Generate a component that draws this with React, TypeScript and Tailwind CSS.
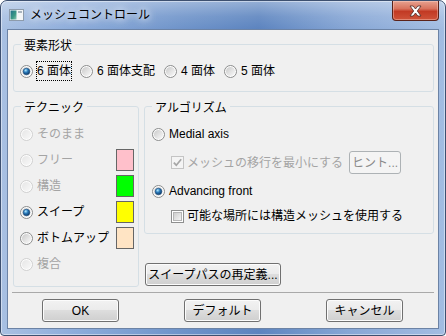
import clsx from 'clsx';
import type { ReactNode } from 'react';

const Radio = ({ checked = false, disabled = false }: { checked?: boolean; disabled?: boolean }) => (
  <svg width="13" height="13" viewBox="0 0 13 13" className="shrink-0">
    <defs>
      <linearGradient id="rb-face" x1="0" y1="0" x2="1" y2="1">
        <stop offset="0" stopColor="#c9c9c9" />
        <stop offset="1" stopColor="#fafafa" />
      </linearGradient>
      <linearGradient id="rb-face-dis" x1="0" y1="0" x2="1" y2="1">
        <stop offset="0" stopColor="#e6e6e6" />
        <stop offset="1" stopColor="#f8f8f8" />
      </linearGradient>
      <radialGradient id="rb-dot" cx="0.38" cy="0.32" r="0.7">
        <stop offset="0" stopColor="#b4ecff" />
        <stop offset="0.45" stopColor="#2b7cbd" />
        <stop offset="1" stopColor="#0d3763" />
      </radialGradient>
    </defs>
    <circle cx="6.5" cy="6.5" r="6" fill="#fdfdfd" stroke={disabled ? '#cfcfcf' : '#8b8c8c'} />
    <circle cx="6.5" cy="6.5" r="4.6" fill={disabled ? 'url(#rb-face-dis)' : 'url(#rb-face)'} />
    {checked && <circle cx="6.5" cy="6.5" r="3.3" fill="url(#rb-dot)" stroke="#174a7c" strokeWidth="0.6" />}
  </svg>
);

const Check = ({ checked = false, disabled = false }: { checked?: boolean; disabled?: boolean }) => (
  <svg width="13" height="13" viewBox="0 0 13 13" className="shrink-0">
    <defs>
      <linearGradient id="cb-face" x1="0" y1="0" x2="1" y2="1">
        <stop offset="0" stopColor="#cbcbcb" />
        <stop offset="1" stopColor="#f6f6f6" />
      </linearGradient>
    </defs>
    <rect x="0.5" y="0.5" width="12" height="12" fill={disabled ? '#f4f4f4' : '#ffffff'} stroke={disabled ? '#c4c4c4' : '#8e8f8f'} />
    {!disabled && <rect x="2.5" y="2.5" width="8" height="8" fill="url(#cb-face)" stroke="#b5b5b5" />}
    {checked && (
      <path d="M2.8 6.6 L5.3 9.2 L10.2 3.2" fill="none" stroke={disabled ? '#a6a6a6' : '#222222'} strokeWidth="1.7" />
    )}
  </svg>
);

const Btn = ({ children, className, disabled }: { children: ReactNode; className?: string; disabled?: boolean }) => (
  <button
    disabled={disabled}
    className={clsx(
      'h-[23px] shrink-0 rounded-[3px] border flex items-center justify-center text-[12px] leading-[16px]',
      disabled
        ? 'border-[#adb2b5] bg-[#f4f4f4] text-[#8a8a8a]'
        : 'border-[#707070] text-black bg-[linear-gradient(180deg,#f2f2f2_0%,#ebebeb_48%,#dddddd_50%,#cfcfcf_100%)] shadow-[inset_0_0_0_1px_#fcfcfc]',
      className
    )}
  >
    {children}
  </button>
);

const Legend = ({ children }: { children: ReactNode }) => (
  <legend className="ml-[7px] px-[3px] pt-[4px] leading-[16px] text-black">{children}</legend>
);

const TitleIcon = () => (
  <svg width="15" height="12" viewBox="0 0 15 12" className="shrink-0 ml-[8px]">
    <defs>
      <linearGradient id="ti-l" x1="0" y1="0" x2="1" y2="1">
        <stop offset="0" stopColor="#1f6f8c" />
        <stop offset="0.6" stopColor="#3c9a86" />
        <stop offset="1" stopColor="#8cc7b6" />
      </linearGradient>
    </defs>
    <rect x="0.5" y="0.5" width="14" height="11" fill="#f3f5f7" stroke="#8d9bab" />
    <rect x="1.5" y="1.5" width="6" height="9" fill="url(#ti-l)" />
    <rect x="9" y="2" width="4" height="2" fill="#a9b4bf" />
  </svg>
);

const techniques = [
  { label: 'そのまま', disabled: true, color: null },
  { label: 'フリー', disabled: true, color: 'bg-[#ffc0cb]' },
  { label: '構造', disabled: true, color: 'bg-[#00ff00]' },
  { label: 'スイープ', checked: true, color: 'bg-[#ffff00]' },
  { label: 'ボトムアップ', color: 'bg-[#ffe4c4]' },
  { label: '複合', disabled: true, color: null },
];

const shapes = ['6 面体', '6 面体支配', '4 面体', '5 面体'];

export default function App() {
  return (
    <div className="w-[446px] h-[336px] font-['Liberation_Sans','Noto_Sans_CJK_JP',sans-serif] text-[12px] leading-[16px] text-black">
      <div className="w-full h-full flex flex-col rounded-t-[7px] rounded-b-[4px] border border-[#3d5070] overflow-hidden shadow-[inset_0_0_0_1px_rgba(255,255,255,0.45)] bg-[linear-gradient(90deg,#a8c0e2_0%,#8eaddb_16%,#6f94ca_40%,#5c84bf_58%,#86a6d5_78%,#a3bde2_100%)]">
        {/* title bar */}
        <div className="h-[28px] shrink-0 flex items-center bg-[linear-gradient(180deg,rgba(255,255,255,0.35)_0%,rgba(255,255,255,0.1)_55%,rgba(255,255,255,0)_100%)]">
          <TitleIcon />
          <span className="ml-[6px] text-[12px] text-black [text-shadow:0_0_6px_rgba(255,255,255,0.95),0_0_10px_rgba(255,255,255,0.8),0_0_14px_rgba(255,255,255,0.6)]">
            メッシュコントロール
          </span>
          <div className="ml-auto mr-[6px] self-start w-[47px] h-[20px] rounded-b-[4px] border border-t-0 border-[#5b2219] flex items-center justify-center shadow-[inset_0_0_0_1px_rgba(255,220,210,0.4)] bg-[linear-gradient(180deg,#e7a290_0%,#d9735e_40%,#c23a24_55%,#cf5339_100%)]">
            <svg width="13" height="12" viewBox="0 0 13 12">
              <path
                d="M1 1 L4.2 1 L6.5 4 L8.8 1 L12 1 L8.3 6 L12 11 L8.8 11 L6.5 8 L4.2 11 L1 11 L4.7 6 Z"
                fill="#ffffff"
                stroke="#4a2a26"
                strokeWidth="0.8"
                strokeLinejoin="round"
              />
            </svg>
          </div>
        </div>

        {/* client */}
        <div className="flex-1 px-[6px] pb-[6px]">
          <div className="h-full border border-[#6c83a5] bg-[#f0f0f0] pt-[4px] pl-[5px] flex flex-col">
            {/* 要素形状 */}
            <fieldset className="w-[421px] h-[58px] shrink-0 border border-[#d5dfe5] rounded-[3px]">
              <Legend>要素形状</Legend>
              <div className="pt-[7px] pl-[6px] flex items-center h-[27px] gap-[8px]">
                {shapes.map((s, i) => (
                  <div key={s} className="flex items-center">
                    <Radio checked={i === 0} />
                    <span
                      className={clsx(
                        'ml-[3px] h-[20px] flex items-center border',
                        i === 0 ? 'border-dotted border-black' : 'border-transparent'
                      )}
                    >
                      {s}
                    </span>
                  </div>
                ))}
              </div>
            </fieldset>

            <div className="mt-[4px] flex items-start gap-[5px] shrink-0">
              {/* テクニック */}
              <fieldset className="w-[126px] h-[191px] shrink-0 border border-[#d5dfe5] rounded-[3px]">
                <Legend>テクニック</Legend>
                <div className="pt-[5px]">
                  {techniques.map((t) => (
                    <div key={t.label} className="h-[26px] flex items-center pl-[6px] pr-[4px]">
                      <Radio checked={t.checked} disabled={t.disabled} />
                      <span className={clsx('ml-[4px]', t.disabled ? 'text-[#a4a4a4]' : 'text-black')}>{t.label}</span>
                      {t.color && <div className={clsx('ml-auto w-[18px] h-[22px] border border-[#666666]', t.color)} />}
                    </div>
                  ))}
                </div>
              </fieldset>

              {/* アルゴリズム */}
              <div className="w-[290px] flex flex-col">
                <fieldset className="w-[290px] h-[138px] shrink-0 border border-[#d5dfe5] rounded-[3px]">
                  <Legend>アルゴリズム</Legend>
                  <div className="pt-[10px] pl-[7px] flex flex-col">
                    <div className="h-[16px] flex items-center">
                      <Radio />
                      <span className="ml-[4px]">Medial axis</span>
                    </div>
                    <div className="mt-[9px] h-[23px] flex items-center pl-[19px]">
                      <Check checked disabled />
                      <span className="ml-[3px] text-[#a4a4a4]">メッシュの移行を最小にする</span>
                      <Btn disabled className="ml-[6px] w-[52px]">
                        ヒント...
                      </Btn>
                    </div>
                    <div className="mt-[9px] h-[16px] flex items-center">
                      <Radio checked />
                      <span className="ml-[4px]">Advancing front</span>
                    </div>
                    <div className="mt-[9px] h-[16px] flex items-center pl-[19px]">
                      <Check />
                      <span className="ml-[3px]">可能な場所には構造メッシュを使用する</span>
                    </div>
                  </div>
                </fieldset>
                <Btn className="mt-[29px] ml-[1px] w-[136px]">スイープパスの再定義...</Btn>
              </div>
            </div>

            <div className="mt-[5px] ml-[-1px] w-[422px] h-[1px] shrink-0 bg-[#a9a9a9]" />

            <div className="mt-[6px] ml-[29px] flex gap-[65px]">
              <Btn className="w-[77px]">OK</Btn>
              <Btn className="w-[77px]">デフォルト</Btn>
              <Btn className="w-[77px]">キャンセル</Btn>
            </div>
          </div>
        </div>
      </div>
    </div>
  );
}
